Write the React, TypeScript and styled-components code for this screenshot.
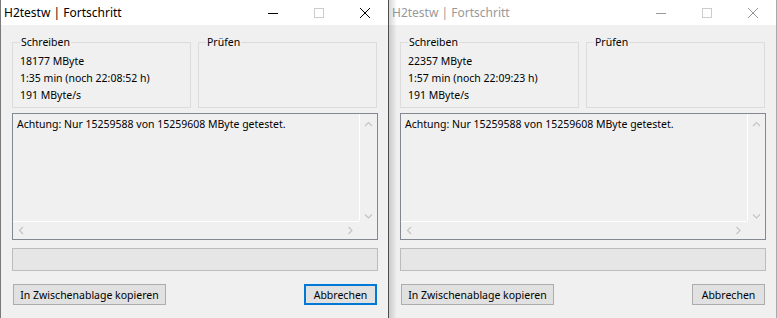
import React from "react";
import styled, { createGlobalStyle, css } from "styled-components";

const GlobalStyle = createGlobalStyle`
  html, body { margin: 0; padding: 0; background: #f0f0f0; }
  body { font-family: "Noto Sans", "Liberation Sans", sans-serif; font-size: 10.5px; color: #000; }
  * { box-sizing: border-box; }
`;

const Screen = styled.div`
  display: flex;
  width: 777px;
  height: 318px;
  overflow: hidden;
`;

const Win = styled.div<{ $active: boolean }>`
  position: relative;
  display: flex;
  flex-direction: column;
  height: 318px;
  background: #f0f0f0;
  ${(p) =>
    p.$active
      ? css`
          width: 389px;
          border-left: 1px solid #7a7a7a;
          border-right: 1px solid #4e4e4e;
          z-index: 1;
        `
      : css`
          width: 388px;
          border-right: 1px solid #aaaaaa;
          &::before {
            content: "";
            position: absolute;
            left: 0;
            top: 0;
            bottom: 0;
            width: 8px;
            background: linear-gradient(to right, rgba(0, 0, 0, 0.16), rgba(0, 0, 0, 0));
            pointer-events: none;
          }
        `}
`;

const TitleBar = styled.div`
  display: flex;
  align-items: center;
  height: 25px;
  background: #ffffff;
  flex-shrink: 0;
`;

const Title = styled.span<{ $active: boolean }>`
  padding-left: 3px;
  font-size: 12px;
  color: ${(p) => (p.$active ? "#000000" : "#999999")};
  white-space: nowrap;
`;

const Captions = styled.div`
  display: flex;
  margin-left: auto;
  height: 100%;
`;

const CaptionButton = styled.div`
  width: 46px;
  height: 100%;
  display: flex;
  align-items: center;
  justify-content: center;
`;

const Body = styled.div`
  display: flex;
  flex-direction: column;
  padding: 9px 10px 0 11px;
`;

const Groups = styled.div`
  display: grid;
  grid-template-columns: 179px 179px;
  column-gap: 7px;
`;

const Group = styled.fieldset`
  margin: 0;
  padding: 0 0 2px 7px;
  border: 1px solid #dcdcdc;
  height: 74px;
  min-width: 0;
`;

const Legend = styled.legend`
  padding: 0 1px;
  line-height: 17px;
`;

const Line = styled.div`
  line-height: 17px;
  white-space: nowrap;
`;

const Lines = styled.div`
  padding-top: 2px;
`;

const Log = styled.div`
  margin-top: 5px;
  height: 127px;
  width: 366px;
  border: 1px solid #828790;
  display: grid;
  grid-template-columns: 1fr 18px;
  grid-template-rows: 1fr 18px;
`;

const LogText = styled.div`
  padding: 2px 0 0 4px;
  line-height: 17px;
  white-space: nowrap;
  overflow: hidden;
`;

const VScroll = styled.div`
  border-left: 1px solid #ffffff;
  display: flex;
  flex-direction: column;
  justify-content: space-between;
  align-items: center;
  padding: 7px 0 1px 0;
`;

const HScroll = styled.div`
  border-top: 1px solid #ffffff;
  display: flex;
  justify-content: space-between;
  align-items: center;
  padding: 0 5px 0 5px;
`;

const Corner = styled.div``;

const Progress = styled.div`
  margin-top: 8px;
  width: 366px;
  height: 23px;
  border: 1px solid #bcbcbc;
  background: #e6e6e6;
`;

const ButtonRow = styled.div`
  display: flex;
  justify-content: space-between;
  margin-top: 13px;
  padding: 0 1px 0 1px;
  width: 366px;
`;

const Button = styled.div<{ $default?: boolean; $w: number }>`
  width: ${(p) => p.$w}px;
  height: 21px;
  display: flex;
  align-items: center;
  justify-content: center;
  background: #e1e1e1;
  border: ${(p) => (p.$default ? "2px solid #0078d7" : "1px solid #adadad")};
  white-space: nowrap;
`;

const Arrow = ({ dir }: { dir: "up" | "down" | "left" | "right" }) => {
  const d =
    dir === "up"
      ? "M1 5 L4.5 1.5 L8 5"
      : dir === "down"
      ? "M1 1.5 L4.5 5 L8 1.5"
      : dir === "left"
      ? "M5 1 L1.5 4.5 L5 8"
      : "M1.5 1 L5 4.5 L1.5 8";
  const w = dir === "up" || dir === "down" ? 9 : 7;
  const h = dir === "up" || dir === "down" ? 7 : 9;
  return (
    <svg width={w} height={h} viewBox={`0 0 ${w} ${h}`}>
      <path d={d} fill="none" stroke="#c4c4c4" strokeWidth="1.2" />
    </svg>
  );
};

type WinProps = {
  active: boolean;
  written: string;
  time: string;
  speed: string;
};

const Window = ({ active, written, time, speed }: WinProps) => {
  const c = active ? "#000000" : "#999999";
  return (
    <Win $active={active}>
      <TitleBar>
        <Title $active={active}>H2testw | Fortschritt</Title>
        <Captions>
          <CaptionButton>
            <svg width="10" height="10" viewBox="0 0 10 10">
              <path d="M0 5.5 H10" stroke={c} strokeWidth="1" />
            </svg>
          </CaptionButton>
          <CaptionButton>
            <svg width="10" height="10" viewBox="0 0 10 10">
              <rect x="0.5" y="0.5" width="9" height="9" fill="none" stroke="#cccccc" strokeWidth="1" />
            </svg>
          </CaptionButton>
          <CaptionButton>
            <svg width="10" height="10" viewBox="0 0 10 10">
              <path d="M0 0 L10 10 M10 0 L0 10" stroke={c} strokeWidth="1" />
            </svg>
          </CaptionButton>
        </Captions>
      </TitleBar>
      <Body>
        <Groups>
          <Group>
            <Legend>Schreiben</Legend>
            <Lines>
              <Line>{written}</Line>
              <Line>{time}</Line>
              <Line>{speed}</Line>
            </Lines>
          </Group>
          <Group>
            <Legend>Prüfen</Legend>
          </Group>
        </Groups>
        <Log>
          <LogText>Achtung: Nur 15259588 von 15259608 MByte getestet.</LogText>
          <VScroll>
            <Arrow dir="up" />
            <Arrow dir="down" />
          </VScroll>
          <HScroll>
            <Arrow dir="left" />
            <Arrow dir="right" />
          </HScroll>
          <Corner />
        </Log>
        <Progress />
        <ButtonRow>
          <Button $w={153}>In Zwischenablage kopieren</Button>
          <Button $w={73} $default={active}>
            Abbrechen
          </Button>
        </ButtonRow>
      </Body>
    </Win>
  );
};

export default function App() {
  return (
    <>
      <GlobalStyle />
      <Screen>
        <Window active written="18177 MByte" time="1:35 min (noch 22:08:52 h)" speed="191 MByte/s" />
        <Window active={false} written="22357 MByte" time="1:57 min (noch 22:09:23 h)" speed="191 MByte/s" />
      </Screen>
    </>
  );
}
